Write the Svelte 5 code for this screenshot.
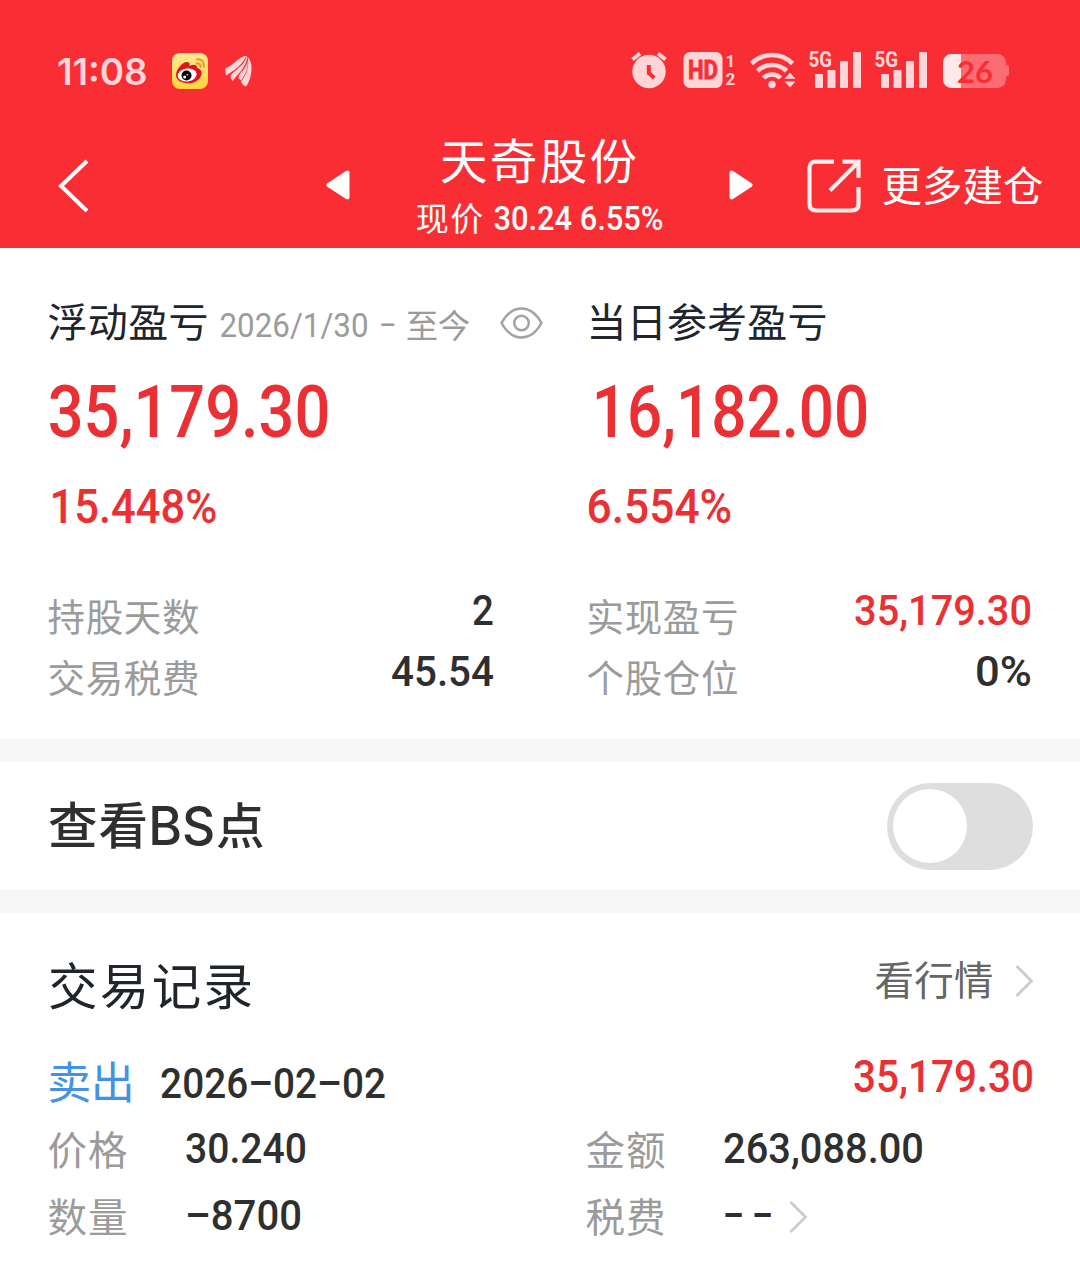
<script>
  const left = [
    { label: '持股天数', value: '2', w: 18 },
    { label: '交易税费', value: '45.54', w: 99 },
  ];
  const right = [
    { label: '实现盈亏', value: '35,179.30', w: 174, tone: 'red' },
    { label: '个股仓位', value: '0%', w: 53 },
  ];
</script>

<!-- Latin digits condensed to a given ink width -->
{#snippet num(text, w, h, base, size, cls = '', lb = 0.045)}
  <svg class="t num {cls}" width={w} height={h}>
    <text x={-size * lb} y={base} font-size={size} textLength={w + size * (lb + 0.045)} lengthAdjust="spacingAndGlyphs">{text}</text>
  </svg>
{/snippet}

<!-- Chinese text tracked out to a given ink width -->
{#snippet cjk(text, w, h, base, size, cls = '')}
  <svg class="t cjk {cls}" width={w} height={h}>
    <text x={-size * 0.04} y={base} font-size={size} textLength={w + size * 0.08} lengthAdjust="spacing">{text}</text>
  </svg>
{/snippet}

{#snippet signal()}
  <svg class="signal" width="53" height="40" viewBox="808 50 53 40">
    <text class="tag" x="808.5" y="67" font-size="21.5" textLength="23.500" lengthAdjust="spacingAndGlyphs">5G</text>
    <rect x="815" y="74" width="8" height="14" rx="1" />
    <rect x="827.5" y="70" width="8" height="18" rx="1" />
    <rect x="840" y="61" width="8" height="27" rx="1" />
    <rect x="853" y="52" width="8" height="36" rx="1" />
  </svg>
{/snippet}

<main>
  <header>
    <div class="status">
      {@render num('11:08', 88, 40, 34.5, 37, 'clock', 0.03)}
      <svg class="weibo" width="36" height="36" viewBox="0 0 36 36">
        <defs>
          <linearGradient id="gold" x1="0" y1="0" x2="0" y2="1">
            <stop offset="0" stop-color="#ffe995" /><stop offset="1" stop-color="#ffd53c" />
          </linearGradient>
        </defs>
        <rect width="36" height="36" rx="8" fill="url(#gold)" />
        <path d="M4 22C4 17 10 9 15 9c2.500 0 3 2 2.500 4 4-2 8-1.500 7.500 2 3 .7 5 2.500 4.500 6C28.500 27 22.500 30.500 15.500 30.300 9 30 4 27 4 22Z" fill="#df1421" />
        <ellipse cx="15.200" cy="22" rx="9.500" ry="6.500" fill="#fff" transform="rotate(-7 15 22)" />
        <circle cx="14.500" cy="22.500" r="5" fill="#080505" />
        <circle cx="12.700" cy="24" r="1.500" fill="#fff" /><circle cx="15.300" cy="21.800" r=".8" fill="#fff" />
        <path d="M24.500 10.500c3-.5 4.500 1.500 4 4M25 6.300c4.600-.6 7.600 3.200 6.800 7.700" fill="none" stroke="#e79e25" stroke-width="2" stroke-linecap="round" />
      </svg>
      <svg class="wing" width="27" height="31" viewBox="0 0 27 31">
        <path d="M0 12.500C7 10 12 3 19.500 0H21C18 8 11 13.500 1 19.500Z" />
        <path d="M21.300 0C21 9 9 14 5.500 19.500C5.500 22 6.500 24 8 25C11 19 21.500 12 22.300 1Z" />
        <path d="M22.800 1C25.500 4 26.700 8 26.500 13C26.200 20 24 27 21 30.500C18.500 29.500 17 28 16 25.500C22 18 24 12 22.800 1Z" />
        <path d="M22.600 5C21.500 13 13.500 17 13.500 22L16 24.500C20.500 18 23.300 13 22.600 5Z" />
      </svg>

      <svg class="alarm" width="37" height="40" viewBox="631 50 37 40">
        <circle cx="649" cy="71.500" r="16.700" />
        <path class="line" d="M632.500 59.500l7.500-6M665.500 59.500l-7.500-6" stroke-width="4" />
        <path d="M648.800 65v8l5.500 5" fill="none" stroke="#f92e34" stroke-width="4" />
      </svg>
      <svg class="hd" width="52" height="40" viewBox="683 50 52 40">
        <rect x="683.500" y="52" width="39" height="36" rx="6.500" />
        <text class="cut bold" x="688" y="79" font-size="25" textLength="30" lengthAdjust="spacingAndGlyphs">HD</text>
        <text class="sub" x="725.500" y="67" font-size="17">1</text>
        <text class="sub" x="725.500" y="85" font-size="17">2</text>
      </svg>
      <svg class="wifi" width="47" height="40" viewBox="750 50 47 40">
        <path class="line" d="M751.500 63.500a29 29 0 0 1 41 0M757.500 71a20.500 20.500 0 0 1 29 0M763.500 78a12 12 0 0 1 17 0" stroke-width="4.600" />
        <circle cx="772" cy="84.500" r="3.700" />
        <path d="M782.500 80L790 71l7.500 9Z" fill="#f92e34" />
        <path d="M784.500 78.700h11l-5.500-6Z" /><path d="M784.500 81.500h11l-5.500 6Z" />
      </svg>
      {@render signal()}
      {@render signal()}
      <svg class="battery" width="66" height="34" viewBox="943 54 66 34">
        <rect x="943" y="54" width="63" height="34" rx="8.500" opacity=".38" />
        <path d="M1006 65h1.500q1.500 0 1.500 2v7q0 2-1.500 2H1006Z" opacity=".38" />
        <path d="M961 54v34h-9.500a8.500 8.500 0 0 1-8.500-8.500v-17a8.500 8.500 0 0 1 8.500-8.500Z" fill="#ffe9ea" />
        <text class="cut level" x="957" y="82.500" font-size="31" textLength="36" lengthAdjust="spacingAndGlyphs">26</text>
      </svg>
    </div>

    <nav>
      <svg class="back" width="30" height="54" viewBox="0 0 30 54"><path d="M29 2L3 27l26 25" /></svg>
      <svg class="prev" width="24" height="30" viewBox="0 0 24 30"><path d="M1 13.500L20 1q3.500-1.500 3.500 2v24q0 3.500-3.500 2L1 16.500q-1.500-1.500 0-3Z" /></svg>
      <div class="title">
        {@render cjk('天奇股份', 193, 66, 47, 47.5)}
        <div class="quote">
          {@render cjk('现价', 65, 46, 32.5, 33)}
          {@render num('30.24 6.55%', 167, 46, 32, 32.5)}
        </div>
      </div>
      <svg class="next" width="24" height="30" viewBox="0 0 24 30"><path d="M23 13.500L4 1Q.5-.5.500 3v24q0 3.500 3.500 2L23 16.500q1.500-1.500 0-3Z" /></svg>
      <svg class="share" width="54" height="54" viewBox="0 0 54 54"><path d="M27 2.700H9Q2.500 2.700 2.500 9v36q0 6.500 6.500 6.500h36q6.500 0 6.500-6.500V28M35.500 2.700h16v16M50.500 4L23 31.500" /></svg>
      {@render cjk('更多建仓', 159, 60, 37, 40.5)}
    </nav>
  </header>

  <section class="summary">
    <div class="col">
      <div class="head">
        {@render cjk('浮动盈亏', 158, 48, 37, 40, 'ink')}
        {@render num('2026/1/30', 146, 48, 37, 33.5, 'gray thin')}
        {@render num('–', 15, 48, 37, 33.5, 'gray thin', 0.02)}
        {@render cjk('至今', 62, 48, 38, 32.5, 'gray')}
        <svg class="eye" width="43" height="32" viewBox="0 0 43 32"><path d="M1.500 16C7 6 14 1.500 21.500 1.500S36 6 41.500 16C36 26 29 30.500 21.500 30.500S7 26 1.500 16Z" /><circle cx="21.500" cy="16" r="7.300" /></svg>
      </div>
      <div class="big">{@render num('35,179.30', 276, 66, 57, 73, 'red')}</div>
      <div class="pct">{@render num('15.448%', 164, 44, 37, 49, 'red', 0.03)}</div>
      <dl>
        {#each left as r}
          <dt>{@render cjk(r.label, 149, 61, 35.5, 37.5, 'gray')}</dt>
          <dd>{@render num(r.value, r.w, 61, 30, 43, 'dark')}</dd>
        {/each}
      </dl>
    </div>
    <div class="col second">
      <div class="head">{@render cjk('当日参考盈亏', 238, 48, 37, 40, 'ink')}</div>
      <div class="big inset">{@render num('16,182.00', 271, 66, 57, 73, 'red', 0.045)}</div>
      <div class="pct">{@render num('6.554%', 142, 44, 37, 49, 'red', 0.03)}</div>
      <dl>
        {#each right as r}
          <dt>{@render cjk(r.label, 149, 61, 35.5, 37.5, 'gray')}</dt>
          <dd>{@render num(r.value, r.w, 61, 30, 43, r.tone ?? 'dark')}</dd>
        {/each}
      </dl>
    </div>
  </section>

  <section class="points">
    <div class="bs">
      {@render cjk('查看', 96, 60, 48, 49.5, 'dark heavy')}
      {@render num('BS', 61, 60, 49, 53, 'dark latin', 0.07)}
      {@render cjk('点', 45, 60, 48, 48.5, 'dark heavy')}
    </div>
    <div class="toggle"><span></span></div>
  </section>

  <section class="records">
    <div class="rhead">
      {@render cjk('交易记录', 201, 60, 49.5, 49.5, 'ink')}
      <div class="more">
        {@render cjk('看行情', 116, 60, 39.5, 39.5, 'mid')}
        <svg class="arrow" width="19" height="34" viewBox="0 0 19 34"><path d="M1.500 2l15 15-15 15" /></svg>
      </div>
    </div>
    <div class="row trade">
      {@render cjk('卖出', 84, 60, 42.5, 44, 'blue')}
      {@render num('2026–02–02', 222, 60, 42, 42, 'dark')}
      <div class="end">{@render num('35,179.30', 177, 60, 36, 44, 'red')}</div>
    </div>
    <div class="row detail">
      <div class="cell">{@render cjk('价格', 77, 60, 40.5, 39.5, 'gray')}{@render num('30.240', 118, 60, 38.5, 43, 'dark')}</div>
      <div class="cell">{@render cjk('金额', 77, 60, 40.5, 39.5, 'gray')}{@render num('263,088.00', 197, 60, 38.5, 43, 'dark')}</div>
    </div>
    <div class="row detail">
      <div class="cell">{@render cjk('数量', 77, 60, 40.5, 39.5, 'gray')}{@render num('–8700', 113, 60, 38.5, 43, 'dark')}</div>
      <div class="cell">
        {@render cjk('税费', 77, 60, 40.5, 39.5, 'gray')}{@render num('– –', 46, 60, 38.5, 43, 'dark')}
        <svg class="arrow small" width="19" height="34" viewBox="0 0 19 34"><path d="M1.500 2l15 15-15 15" /></svg>
      </div>
    </div>
  </section>
</main>

<style>
  :global(body) { margin: 0; background: #fff; }
  main { width: 1080px; height: 1276px; overflow: hidden; background: #fff; }
  svg { display: block; flex: none; overflow: visible; }
  .num text { font-family: Roboto, sans-serif; font-weight: 500; }
  .thin text { font-weight: 400; }
  .latin text, .clock text { font-family: Inter, sans-serif; font-weight: 500; }
  .clock text { font-weight: 600; }
  .cjk text { font-family: 'Noto Sans CJK SC', sans-serif; font-weight: 400; }
  .heavy text { font-weight: 500; }
  .t { fill: currentColor; }
  .ink { color: #20242b; }
  .dark { color: #2f2f2f; }
  .gray { color: #9b9b9b; }
  .mid { color: #666; }
  .red { color: #eb2f32; }
  .blue { color: #4492e8; }

  header { height: 248px; background: #f92e34; color: #fff; }
  .status { display: flex; align-items: flex-start; height: 124px; padding: 50px 0 0 58px; box-sizing: border-box; color: #ffd5d7; fill: #ffd5d7; }
  .weibo { margin: 3px 0 0 26px; }
  .wing { margin: 6px 0 0 17px; }
  .alarm { margin-left: 379px; }
  .hd { margin-left: 15px; }
  .wifi { margin-left: 15px; }
  .signal { margin-left: 11px; }
  .signal + .signal { margin-left: 13px; }
  .battery { margin: 4px 0 0 16px; }
  .line { fill: none; stroke: #ffd5d7; }
  .tag, .sub, .cut { font-family: Roboto, sans-serif; font-weight: 700; }
  .cut { fill: #f92e34; }
  .bold { stroke: #f92e34; stroke-width: 0.8; }
  .level { font-family: Lato, sans-serif; }

  nav { display: flex; align-items: flex-start; height: 124px; padding: 8px 0 0 58px; box-sizing: border-box; }
  .back { margin-top: 27px; fill: none; stroke: #fff; stroke-width: 4; }
  .prev { margin: 38px 0 0 238px; fill: #fff; }
  .next { margin: 38px 0 0 65px; fill: #fff; }
  .title { display: flex; flex-direction: column; align-items: center; width: 243px; margin: 0 4px 0 67px; }
  .quote { display: flex; gap: 13px; align-self: flex-start; }
  .share { margin: 27px 22px 0 54px; fill: none; stroke: #ffecec; stroke-width: 4.2; }
  nav > .t { margin-top: 32px; }

  .summary { display: flex; height: 491px; box-sizing: border-box; padding: 52px 50px 0 49px; }
  .col { width: 443px; }
  .second { margin-left: 96px; }
  .head { display: flex; height: 80px; gap: 13px; }
  .head .thin { margin: 0 -1px 0 1px; }
  .eye { margin: 7px 0 0 18px; fill: none; stroke: #a3a3a3; stroke-width: 2.5; }
  .big { height: 106px; padding-left: 2px; }
  .inset { padding-left: 7px; }
  .pct { height: 109px; padding-left: 2px; }
  .second .pct { padding-left: 0; }
  dl { display: grid; grid-template-columns: 1fr auto; grid-auto-rows: 61px; margin: 0; }
  dd { margin: 0; justify-self: end; }

  .points { display: flex; align-items: center; justify-content: space-between; height: 128px; padding: 0 47px 0 50px; border-top: 23px solid #f7f7f7; border-bottom: 23px solid #f7f7f7; }
  .bs { display: flex; gap: 6px; }
  .bs > :global(svg:last-child) { margin-left: -1px; }
  .toggle { width: 146px; height: 87px; padding: 6px; border-radius: 44px; background: #dedede; box-sizing: border-box; }
  .toggle span { display: block; width: 74px; height: 74px; border-radius: 50%; background: #fff; }

  .records { padding: 42px 48px 0 49px; }
  .rhead { display: flex; justify-content: space-between; height: 101px; padding-left: 1px; }
  .more { display: flex; gap: 23px; margin-right: -2px; }
  .arrow { margin-top: 9px; fill: none; stroke: #ccc; stroke-width: 2.8; }
  .row { display: flex; height: 67px; }
  .trade { height: 68px; gap: 29px; }
  .end { margin-left: auto; }
  .cell { display: flex; flex: none; width: 538px; gap: 61px; }
  .small { margin-left: -43px; }
</style>
